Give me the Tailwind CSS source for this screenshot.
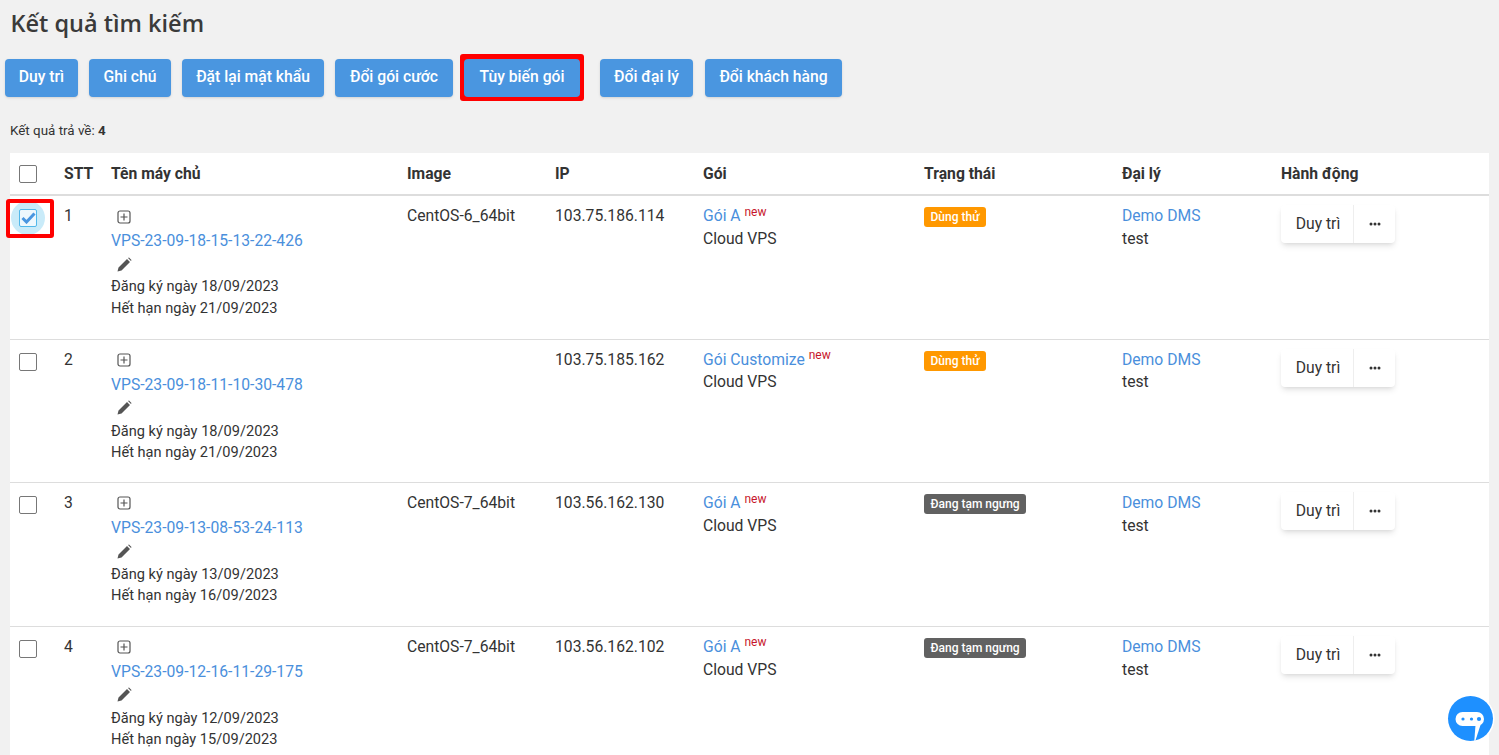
<!DOCTYPE html>
<html lang="vi">
<head>
  <meta charset="UTF-8">
  <title>Kết quả tìm kiếm</title>
  <script src="https://cdn.jsdelivr.net/npm/@tailwindcss/browser@4"></script>
</head>
<body class="bg-[#f1f1f1] h-[755px] overflow-hidden font-['Roboto',sans-serif] text-[#333] relative">

  <h1 class="pl-[10.5px] pt-[7px] h-[59px] text-[23.5px] leading-[33px] font-semibold font-['Open_Sans',sans-serif] text-[#3a3a3a]">Kết quả tìm kiếm</h1>

  <!-- Action buttons -->
  <div class="flex items-center pl-[5px] h-[38px] text-[15.7px] font-medium text-white">
    <button class="h-[38px] w-[73px] pb-[3px] bg-[#4a96e0] rounded shadow-sm">Duy trì</button>
    <button class="h-[38px] w-[82px] pb-[3px] ml-[11px] bg-[#4a96e0] rounded shadow-sm">Ghi chú</button>
    <button class="h-[38px] w-[142px] pb-[3px] ml-[11px] bg-[#4a96e0] rounded shadow-sm">Đặt lại mật khẩu</button>
    <button class="h-[38px] w-[118px] pb-[3px] ml-[11px] bg-[#4a96e0] rounded shadow-sm">Đổi gói cước</button>
    <div class="ml-[7px] p-[4px] pt-[5px] bg-[#f00] rounded-[3px] -mt-[5px] -mb-[4px]">
      <button class="block h-[38px] w-[116px] pb-[3px] bg-[#4a96e0] rounded-sm">Tùy biến gói</button>
    </div>
    <button class="h-[38px] w-[93px] pb-[3px] ml-[16px] bg-[#4a96e0] rounded shadow-sm">Đổi đại lý</button>
    <button class="h-[38px] w-[137px] pb-[3px] ml-[12px] bg-[#4a96e0] rounded shadow-sm">Đổi khách hàng</button>
  </div>

  <p class="pl-[10px] mt-[25px] h-[31px] text-[13.4px] leading-[18px]">Kết quả trả về: <b>4</b></p>

  <!-- Results table -->
  <div class="ml-[10px] w-[1479px] bg-white text-[15.7px] leading-[22.6px]">
    <div class="grid grid-cols-[54px_47px_296px_148px_148px_221px_198px_159px_208px] h-[43px] pt-[1px] items-center border-b-2 border-[#ddd] font-bold">
      <div class="pl-[9px] flex"><span class="w-[18px] h-[18px] border border-[#777] rounded-[2px] bg-white"></span></div>
      <div>STT</div><div>Tên máy chủ</div><div>Image</div><div>IP</div><div>Gói</div><div>Trạng thái</div><div>Đại lý</div><div>Hành động</div>
    </div>

    <!-- Row 1 -->
    <div class="grid grid-cols-[54px_47px_296px_148px_148px_221px_198px_159px_208px] h-[144px] border-b border-[#ddd] pt-[9px]">
      <div class="pl-[9px] relative">
        <div class="absolute left-[1px] top-[-4px] w-[34px] h-[34px] rounded-full bg-[#c9ebf9]"></div>
        <div class="absolute left-[-4px] top-[-6px] w-[48px] h-[39px] border-[4px] border-[#f00] rounded-[3px]"></div>
        <span class="relative mt-[4px] flex items-center justify-center w-[18px] h-[18px] border border-[#52b8ea] rounded-[2px] bg-[#eef8fd]">
          <svg class="shrink-0" width="15" height="12" viewBox="0 0 15 12"><path d="M1.5 6 L5.5 10 L13.5 1.5" fill="none" stroke="#4a96e0" stroke-width="3"/></svg>
        </span>
      </div>
      <div>1</div>
      <div>
        <svg class="ml-[6px] mt-[5px] mb-[6px] block" width="14" height="14" viewBox="0 0 14 14"><rect x="1" y="1" width="12" height="12" rx="2" fill="none" stroke="#555" stroke-width="1.2"/><path d="M7 3.5v7M3.5 7h7" stroke="#555" stroke-width="1.2"/></svg>
        <a class="block text-[#4a8fdc] h-[23px]">VPS-23-09-18-15-13-22-426</a>
        <svg class="ml-[6px] mt-[4px] mb-[4px] block" width="15" height="15" viewBox="0 0 15 15"><path d="M0.5 14.5 L1.5 10.5 L10 2 L13 5 L4.5 13.5 Z M11 1 L12 0.5 L14.5 3 L14 4 Z" fill="#555"/></svg>
        <p class="text-[14.6px] leading-[21.5px]">Đăng ký ngày 18/09/2023</p>
        <p class="text-[14.6px] leading-[21.5px]">Hết hạn ngày 21/09/2023</p>
      </div>
      <div>CentOS-6_64bit</div>
      <div>103.75.186.114</div>
      <div><a class="text-[#4a8fdc]">Gói A</a> <sup class="top-[-5px] text-[12px] text-[#c7162b]">new</sup><p>Cloud VPS</p></div>
      <div><span class="inline-block mt-[1px] bg-[#ff9800] text-white text-[12px] font-medium leading-[20px] h-[20px] px-[6.5px] rounded-[3px]">Dùng thử</span></div>
      <div><a class="block text-[#4a8fdc]">Demo DMS</a><p>test</p></div>
      <div><div class="inline-flex h-[38px] rounded shadow-md bg-white"><span class="w-[73px] pl-[2px] flex items-center justify-center border-r border-[#eee]">Duy trì</span><span class="w-[41px] flex items-center justify-center"><svg width="12" height="4" viewBox="0 0 12 4"><circle cx="2" cy="2" r="1.5" fill="#333"/><circle cx="6" cy="2" r="1.5" fill="#333"/><circle cx="10" cy="2" r="1.5" fill="#333"/></svg></span></div></div>
    </div>

    <!-- Row 2 -->
    <div class="grid grid-cols-[54px_47px_296px_148px_148px_221px_198px_159px_208px] h-[143px] border-b border-[#ddd] pt-[9px]">
      <div class="pl-[9px]"><span class="mt-[4px] block w-[18px] h-[18px] border border-[#777] rounded-[2px] bg-white"></span></div>
      <div>2</div>
      <div>
        <svg class="ml-[6px] mt-[4px] mb-[7px] block" width="14" height="14" viewBox="0 0 14 14"><rect x="1" y="1" width="12" height="12" rx="2" fill="none" stroke="#555" stroke-width="1.2"/><path d="M7 3.5v7M3.5 7h7" stroke="#555" stroke-width="1.2"/></svg>
        <a class="block text-[#4a8fdc] h-[23px]">VPS-23-09-18-11-10-30-478</a>
        <svg class="ml-[6px] mt-[3px] mb-[6px] block" width="15" height="15" viewBox="0 0 15 15"><path d="M0.5 14.5 L1.5 10.5 L10 2 L13 5 L4.5 13.5 Z M11 1 L12 0.5 L14.5 3 L14 4 Z" fill="#555"/></svg>
        <p class="text-[14.6px] leading-[21px]">Đăng ký ngày 18/09/2023</p>
        <p class="text-[14.6px] leading-[21px]">Hết hạn ngày 21/09/2023</p>
      </div>
      <div></div>
      <div>103.75.185.162</div>
      <div><a class="text-[#4a8fdc]">Gói Customize</a> <sup class="text-[12px] text-[#c7162b]">new</sup><p class="-mt-[1px]">Cloud VPS</p></div>
      <div><span class="inline-block bg-[#ff9800] text-white text-[12px] font-medium leading-[20px] h-[20px] px-[6.5px] rounded-[3px]">Dùng thử</span></div>
      <div><a class="block text-[#4a8fdc]">Demo DMS</a><p class="-mt-[1px]">test</p></div>
      <div><div class="inline-flex h-[38px] rounded shadow-md bg-white"><span class="w-[73px] pl-[2px] flex items-center justify-center border-r border-[#eee]">Duy trì</span><span class="w-[41px] flex items-center justify-center"><svg width="12" height="4" viewBox="0 0 12 4"><circle cx="2" cy="2" r="1.5" fill="#333"/><circle cx="6" cy="2" r="1.5" fill="#333"/><circle cx="10" cy="2" r="1.5" fill="#333"/></svg></span></div></div>
    </div>

    <!-- Row 3 -->
    <div class="grid grid-cols-[54px_47px_296px_148px_148px_221px_198px_159px_208px] h-[144px] border-b border-[#ddd] pt-[9px]">
      <div class="pl-[9px]"><span class="mt-[4px] block w-[18px] h-[18px] border border-[#777] rounded-[2px] bg-white"></span></div>
      <div>3</div>
      <div>
        <svg class="ml-[6px] mt-[4px] mb-[7px] block" width="14" height="14" viewBox="0 0 14 14"><rect x="1" y="1" width="12" height="12" rx="2" fill="none" stroke="#555" stroke-width="1.2"/><path d="M7 3.5v7M3.5 7h7" stroke="#555" stroke-width="1.2"/></svg>
        <a class="block text-[#4a8fdc] h-[23px]">VPS-23-09-13-08-53-24-113</a>
        <svg class="ml-[6px] mt-[4px] mb-[5px] block" width="15" height="15" viewBox="0 0 15 15"><path d="M0.5 14.5 L1.5 10.5 L10 2 L13 5 L4.5 13.5 Z M11 1 L12 0.5 L14.5 3 L14 4 Z" fill="#555"/></svg>
        <p class="text-[14.6px] leading-[21px]">Đăng ký ngày 13/09/2023</p>
        <p class="text-[14.6px] leading-[21px]">Hết hạn ngày 16/09/2023</p>
      </div>
      <div>CentOS-7_64bit</div>
      <div>103.56.162.130</div>
      <div><a class="text-[#4a8fdc]">Gói A</a> <sup class="top-[-5px] text-[12px] text-[#c7162b]">new</sup><p>Cloud VPS</p></div>
      <div><span class="inline-block bg-[#616161] text-white text-[12px] font-medium leading-[20px] h-[20px] px-[6.5px] rounded-[3px]">Đang tạm ngưng</span></div>
      <div><a class="block text-[#4a8fdc]">Demo DMS</a><p>test</p></div>
      <div><div class="inline-flex h-[38px] rounded shadow-md bg-white"><span class="w-[73px] pl-[2px] flex items-center justify-center border-r border-[#eee]">Duy trì</span><span class="w-[41px] flex items-center justify-center"><svg width="12" height="4" viewBox="0 0 12 4"><circle cx="2" cy="2" r="1.5" fill="#333"/><circle cx="6" cy="2" r="1.5" fill="#333"/><circle cx="10" cy="2" r="1.5" fill="#333"/></svg></span></div></div>
    </div>

    <!-- Row 4 -->
    <div class="grid grid-cols-[54px_47px_296px_148px_148px_221px_198px_159px_208px] h-[144px] pt-[9px]">
      <div class="pl-[9px]"><span class="mt-[4px] block w-[18px] h-[18px] border border-[#777] rounded-[2px] bg-white"></span></div>
      <div>4</div>
      <div>
        <svg class="ml-[6px] mt-[4px] mb-[7px] block" width="14" height="14" viewBox="0 0 14 14"><rect x="1" y="1" width="12" height="12" rx="2" fill="none" stroke="#555" stroke-width="1.2"/><path d="M7 3.5v7M3.5 7h7" stroke="#555" stroke-width="1.2"/></svg>
        <a class="block text-[#4a8fdc] h-[23px]">VPS-23-09-12-16-11-29-175</a>
        <svg class="ml-[6px] mt-[3px] mb-[6px] block" width="15" height="15" viewBox="0 0 15 15"><path d="M0.5 14.5 L1.5 10.5 L10 2 L13 5 L4.5 13.5 Z M11 1 L12 0.5 L14.5 3 L14 4 Z" fill="#555"/></svg>
        <p class="text-[14.6px] leading-[21px]">Đăng ký ngày 12/09/2023</p>
        <p class="text-[14.6px] leading-[21px]">Hết hạn ngày 15/09/2023</p>
      </div>
      <div>CentOS-7_64bit</div>
      <div>103.56.162.102</div>
      <div><a class="text-[#4a8fdc]">Gói A</a> <sup class="text-[12px] text-[#c7162b]">new</sup><p>Cloud VPS</p></div>
      <div><span class="inline-block bg-[#616161] text-white text-[12px] font-medium leading-[20px] h-[20px] px-[6.5px] rounded-[3px]">Đang tạm ngưng</span></div>
      <div><a class="block text-[#4a8fdc]">Demo DMS</a><p>test</p></div>
      <div><div class="inline-flex h-[38px] rounded shadow-md bg-white"><span class="w-[73px] pl-[2px] flex items-center justify-center border-r border-[#eee]">Duy trì</span><span class="w-[41px] flex items-center justify-center"><svg width="12" height="4" viewBox="0 0 12 4"><circle cx="2" cy="2" r="1.5" fill="#333"/><circle cx="6" cy="2" r="1.5" fill="#333"/><circle cx="10" cy="2" r="1.5" fill="#333"/></svg></span></div></div>
    </div>
  </div>

  <!-- Chat bubble -->
  <svg class="absolute left-[1446px] top-[694px]" width="49" height="54" viewBox="0 0 49 54">
    <circle cx="24.5" cy="24.5" r="24" fill="#fff"/>
    <circle cx="24.5" cy="24.5" r="22.5" fill="#1e90ff"/>
    <rect x="9.5" y="18" width="28.5" height="14" rx="7" fill="#fff"/>
    <path d="M29.5 31 L34.5 31 L28 51 Z" fill="#fff"/>
    <circle cx="17" cy="25" r="1.6" fill="#1e90ff"/><circle cx="25.5" cy="25" r="1.6" fill="#1e90ff"/><circle cx="33" cy="25" r="2.1" fill="#1e90ff"/>
  </svg>
</body>
</html>
